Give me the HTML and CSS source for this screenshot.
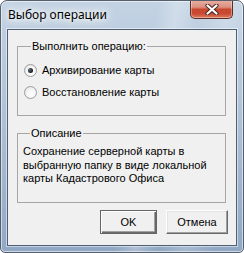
FILE: index.html
```html
<!DOCTYPE html>
<html>
<head>
  <link rel="stylesheet" href="styles.css">
</head>
<body>
  <div class="window">
    <div class="titlebar">
      <div class="title">Выбор операции</div>
      <div class="close-btn">
        <svg width="14" height="11" viewBox="0 0 14 11">
          <path d="M2.5 1.5 L11.5 9.5 M11.5 1.5 L2.5 9.5" stroke="#4a2a24" stroke-width="4.2" stroke-linecap="round"/>
          <path d="M2.5 1.5 L11.5 9.5 M11.5 1.5 L2.5 9.5" stroke="#ffffff" stroke-width="2.2" stroke-linecap="round"/>
        </svg>
      </div>
    </div>
    <div class="client">
      <fieldset class="group group-ops">
        <legend>Выполнить операцию:</legend>
        <label class="radio-row">
          <span class="radio checked"></span>
          <span>Архивирование карты</span>
        </label>
        <label class="radio-row">
          <span class="radio"></span>
          <span>Восстановление карты</span>
        </label>
      </fieldset>
      <fieldset class="group group-desc">
        <legend>Описание</legend>
        <div class="desc">Сохранение серверной карты в выбранную папку в виде локальной карты Кадастрового Офиса</div>
      </fieldset>
      <div class="buttons">
        <button class="btn btn-default">OK</button>
        <button class="btn btn-cancel">Отмена</button>
      </div>
    </div>
  </div>
</body>
</html>
```

FILE: styles.css
```css
body {
  margin: 0;
  background: #ffffff;
  font-family: "Liberation Sans", Arial, sans-serif;
}
.window {
  width: 244px;
  height: 253px;
  box-sizing: border-box;
  border: 1px solid #56606c;
  border-radius: 7px 7px 5px 5px;
  padding: 0 6px 6px 6px;
  display: flex;
  flex-direction: column;
  background:
    linear-gradient(100deg, rgba(255,255,255,0) 0%, rgba(255,255,255,0) 55%, rgba(255,255,255,0.25) 62%, rgba(255,255,255,0) 70%, rgba(255,255,255,0.2) 80%, rgba(255,255,255,0) 90%),
    linear-gradient(180deg, #c3d3e4 0%, #b2c4d9 40%, #90a8c4 100%);
  box-shadow: inset 0 0 0 1px rgba(255,255,255,0.55);
  overflow: hidden;
}
.titlebar {
  height: 28px;
  display: flex;
  justify-content: space-between;
  align-items: flex-start;
  padding-right: 4px;
}
.title {
  font-family: "Noto Sans", sans-serif;
  font-size: 12px;
  line-height: 16px;
  color: #000;
  margin-top: 6px;
  margin-left: 1px;
  text-shadow: 0 0 5px #fff, 0 0 9px #fff, 0 0 14px #fff, 0 0 18px rgba(255,255,255,0.9);
}
.close-btn {
  width: 43px;
  height: 19px;
  margin-top: -1px;
  box-sizing: border-box;
  border: 1px solid #5b2f27;
  border-top: none;
  border-radius: 0 0 5px 5px;
  background: linear-gradient(180deg, #e8b1a5 0%, #dc8f7f 40%, #c8472f 52%, #c94a30 75%, #dd7a5e 100%);
  box-shadow: inset 0 0 0 1px rgba(255,255,255,0.35);
  display: flex;
  align-items: center;
  justify-content: center;
}
.close-btn svg {
  display: block;
}
.client {
  flex: 1;
  background: #f0f0f0;
  border: 1px solid #4e5f74;
  box-shadow: 0 0 0 1px rgba(255,255,255,0.5);
  padding: 0 8px 0 9px;
  display: flex;
  flex-direction: column;
  font-size: 11px;
  color: #000;
}
.group {
  margin: 0 2px 0 0;
  border: 1px solid #a6a6a6;
  padding: 6px 5px 12px 6px;
  min-width: 0;
}
.group legend {
  padding: 0 1px;
  margin-left: 7px;
  line-height: 13px;
}
.group-ops {
  margin-top: 10px;
}
.group-desc {
  margin-top: 11px;
  padding: 5px 5px 16px 5px;
}
.radio-row {
  display: flex;
  align-items: center;
  height: 22px;
  line-height: 13px;
  gap: 5px;
}
.radio {
  width: 13px;
  height: 13px;
  box-sizing: border-box;
  border-radius: 50%;
  border: 1px solid #9a9da0;
  background: radial-gradient(circle at 60% 65%, #ffffff 0%, #f6f6f6 45%, #dedede 100%);
  display: flex;
  align-items: center;
  justify-content: center;
}
.radio.checked::after {
  content: "";
  width: 5px;
  height: 5px;
  border-radius: 50%;
  background: radial-gradient(circle at 35% 35%, #5a6a7a 0%, #1a1a1a 70%);
}
.desc {
  line-height: 13.5px;
}
.buttons {
  display: flex;
  justify-content: flex-end;
  gap: 9px;
  margin-top: 7px;
}
.btn {
  height: 24px;
  font-family: "Liberation Sans", Arial, sans-serif;
  font-size: 11px;
  color: #000;
  background: #f0f0f0;
  padding: 0;
  border: 1px solid;
  border-color: #ffffff #696969 #696969 #ffffff;
  box-shadow: inset -1px -1px 0 #a0a0a0, inset 1px 1px 0 #e3e3e3;
  border-radius: 0;
}
.btn-default {
  width: 57px;
  border: 1px solid #646464;
  box-shadow: inset 1px 1px 0 #ffffff, inset -1px -1px 0 #696969, inset -2px -2px 0 #a0a0a0;
}
.btn-cancel {
  width: 62px;
}
```
